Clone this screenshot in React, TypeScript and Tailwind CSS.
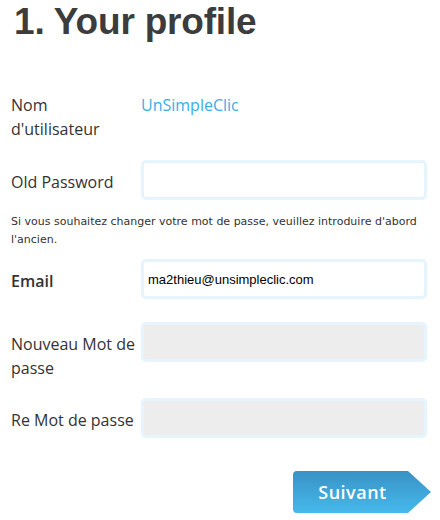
const labelCls = "w-[130px] shrink-0 pt-[10px] text-[16px] leading-[24px] text-[#333]";
const inputCls =
  "w-[286px] h-[40px] rounded-[5px] border-[3px] border-[#e6f4fd] px-[4px] text-[13px] text-black outline-none";

function Field({ label, children, className = "" }: { label: React.ReactNode; children: React.ReactNode; className?: string }) {
  return (
    <div className={`flex items-start ${className}`}>
      <div className={labelCls}>{label}</div>
      {children}
    </div>
  );
}

export default function App() {
  return (
    <div className="w-[440px] h-[520px] bg-white pl-[11px] overflow-hidden" style={{ fontFamily: '"Open Sans", sans-serif' }}>
      <h1
        className="pl-[3px] text-[37px] leading-[44px] font-bold tracking-[-0.2px] text-[#3c3c3c]"
        style={{ fontFamily: '"Liberation Sans", Arial, sans-serif' }}
      >
        1. Your profile
      </h1>

      {/* username */}
      <div className="mt-[49px] flex items-start">
        <div className="w-[130px] shrink-0 text-[16px] leading-[24px] text-[#333]">
          Nom
          <br />
          d'utilisateur
        </div>
        <div className="text-[16px] leading-[24px] font-medium text-[#3aaee6]">UnSimpleClic</div>
      </div>

      <Field label="Old Password" className="mt-[19px]">
        <input type="password" className={`${inputCls} bg-white`} />
      </Field>

      <p
        className="mt-[13px] w-[420px] text-[11px] leading-[18px] text-[#333]"
        style={{ fontFamily: '"DejaVu Sans", Verdana, sans-serif' }}
      >
        Si vous souhaitez changer votre mot de passe, veuillez introduire d'abord l'ancien.
      </p>

      <Field label={<span className="font-semibold">Email</span>} className="mt-[10px]">
        <input
          type="text"
          defaultValue="ma2thieu@unsimpleclic.com"
          className={`${inputCls} bg-white`}
          style={{ fontFamily: '"Liberation Sans", Arial, sans-serif' }}
        />
      </Field>

      <Field
        label={
          <>
            Nouveau Mot de
            <br />
            passe
          </>
        }
        className="mt-[23px]"
      >
        <input type="password" disabled className={`${inputCls} bg-[#ededed]`} />
      </Field>

      <Field label={<span className="whitespace-nowrap">Re Mot de passe</span>} className="mt-[18px]">
        <input type="password" disabled className={`${inputCls} bg-[#ededed]`} />
      </Field>

      <div className="mt-[33px] flex justify-end pr-[9px]">
        <button
          className="w-[138px] h-[42px] rounded-l-[4px] bg-gradient-to-b from-[#3892c5] to-[#46b9ec] pr-[19px] text-[18px] font-semibold tracking-[0.5px] text-white"
          style={{ clipPath: "polygon(0 0, 115px 0, 100% 50%, 115px 100%, 0 100%)" }}
        >
          Suivant
        </button>
      </div>
    </div>
  );
}
